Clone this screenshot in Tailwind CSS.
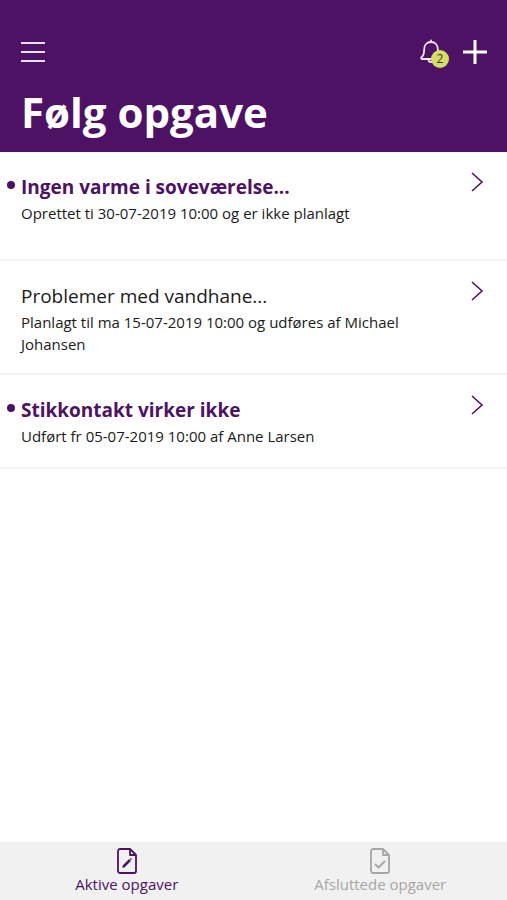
<!DOCTYPE html>
<html lang="da">
<head>
<meta charset="utf-8">
<meta name="viewport" content="width=device-width, initial-scale=1">
<title>Følg opgave</title>
<script src="https://cdn.jsdelivr.net/npm/@tailwindcss/browser@4"></script>
</head>
<body class="flex min-h-screen flex-col bg-white font-['Open_Sans',sans-serif] text-[#1a1a1a]">
<header class="bg-[#4d1263] pt-9 pr-5 pb-3 pl-[21px] text-white">
  <div class="flex h-8 items-center justify-between">
    <button type="button" aria-label="Menu">
      <svg class="h-6 w-6" viewBox="0 0 24 24" stroke="#eadcf2" stroke-width="2"><path d="M0 3h24M0 12h24M0 21h24"/></svg>
    </button>
    <div class="flex items-center gap-3">
      <button type="button" aria-label="2 notifikationer" class="relative">
        <svg class="h-8 w-8" viewBox="0 0 32 32" fill="none" stroke="#f1e4f7" stroke-width="1.8" stroke-linecap="round" stroke-linejoin="round"><path d="M12 4.500V6M12 6c-4.200 0-6.800 3-6.800 7.200 0 4.300-.7 6.500-2.800 8.200-.7.600-.3 1.600.6 1.600h18c.9 0 1.300-1 .6-1.600-2.100-1.700-2.800-3.900-2.800-8.200C18.800 9 16.200 6 12 6ZM9.500 23.500a2.500 2.500 0 0 0 5 0"/></svg>
        <span class="absolute right-0.5 bottom-1 flex h-[18px] w-[18px] translate-y-1 items-center justify-center rounded-full bg-[#d3df62] text-xs text-[#3c3344]">2</span>
      </button>
      <button type="button" aria-label="Ny opgave">
        <svg class="h-6 w-6" viewBox="0 0 24 24" stroke="white" stroke-width="3"><path d="M12 0v24M0 12h24"/></svg>
      </button>
    </div>
  </div>
  <h1 class="mt-4 text-[42px] leading-[56px] font-bold">Følg opgave</h1>
</header>
<main class="flex-1">
  <ul>
    <li class="border-b-2 border-[#f2f2f2]">
      <a href="#" class="flex min-h-[107px] items-start justify-between pt-5 pr-5 pb-4 pl-[21px]">
        <div class="relative w-[400px]">
          <span class="absolute top-[9px] -left-[14px] h-2 w-2 rounded-full bg-[#4d1263]"></span>
          <h2 class="text-[19px] leading-[30px] font-bold text-[#4d1263]">Ingen varme i soveværelse...</h2>
          <p class="text-[15px] leading-[22px]">Oprettet ti 30-07-2019 10:00 og er ikke planlagt</p>
        </div>
        <svg class="h-5 w-5 shrink-0" viewBox="0 0 20 20" fill="none" stroke="#4d1263" stroke-width="1.600"><path d="m5 1 10 9L5 19"/></svg>
      </a>
    </li>
    <li class="border-b-2 border-[#f2f2f2]">
      <a href="#" class="flex items-start justify-between pt-5 pr-5 pb-[18px] pl-[21px]">
        <div class="w-[400px]">
          <h2 class="text-[19px] leading-[30px]">Problemer med vandhane...</h2>
          <p class="text-[15px] leading-[22px]">Planlagt til ma 15-07-2019 10:00 og udføres af Michael Johansen</p>
        </div>
        <svg class="h-5 w-5 shrink-0" viewBox="0 0 20 20" fill="none" stroke="#4d1263" stroke-width="1.600"><path d="m5 1 10 9L5 19"/></svg>
      </a>
    </li>
    <li class="border-b-2 border-[#f2f2f2]">
      <a href="#" class="flex items-start justify-between pt-5 pr-5 pb-5 pl-[21px]">
        <div class="relative w-[400px]">
          <span class="absolute top-[9px] -left-[14px] h-2 w-2 rounded-full bg-[#4d1263]"></span>
          <h2 class="text-[19px] leading-[30px] font-bold text-[#4d1263]">Stikkontakt virker ikke</h2>
          <p class="text-[15px] leading-[22px]">Udført fr 05-07-2019 10:00 af Anne Larsen</p>
        </div>
        <svg class="h-5 w-5 shrink-0" viewBox="0 0 20 20" fill="none" stroke="#4d1263" stroke-width="1.600"><path d="m5 1 10 9L5 19"/></svg>
      </a>
    </li>
  </ul>
</main>
<nav class="grid grid-cols-2 bg-[#f1f1f1] py-1.5 text-[15px] leading-5">
  <a href="#" class="flex flex-col items-center text-[#4d1263]">
    <svg class="h-[26px] w-5" viewBox="0 0 20 26" fill="none" stroke="currentColor" stroke-width="1.800" stroke-linejoin="round"><path d="M3 1h10l6 6v16a2 2 0 0 1-2 2H3a2 2 0 0 1-2-2V3a2 2 0 0 1 2-2ZM13 1v6h6"/><path d="m6.500 18.500 6.500-6.500" stroke-width="2.500"/><path d="m5.500 19.500 1.500-1.500M13.500 11.500l1-1" stroke-width="1.500"/></svg>
    <span>Aktive opgaver</span>
  </a>
  <a href="#" class="flex flex-col items-center text-[#a6a6a6]">
    <svg class="h-[26px] w-5" viewBox="0 0 20 26" fill="none" stroke="currentColor" stroke-width="1.800" stroke-linejoin="round"><path d="M3 1h10l6 6v16a2 2 0 0 1-2 2H3a2 2 0 0 1-2-2V3a2 2 0 0 1 2-2ZM13 1v6h6"/><path d="m5 16 3.500 3.500 6.500-6.500"/></svg>
    <span>Afsluttede opgaver</span>
  </a>
</nav>
</body>
</html>
